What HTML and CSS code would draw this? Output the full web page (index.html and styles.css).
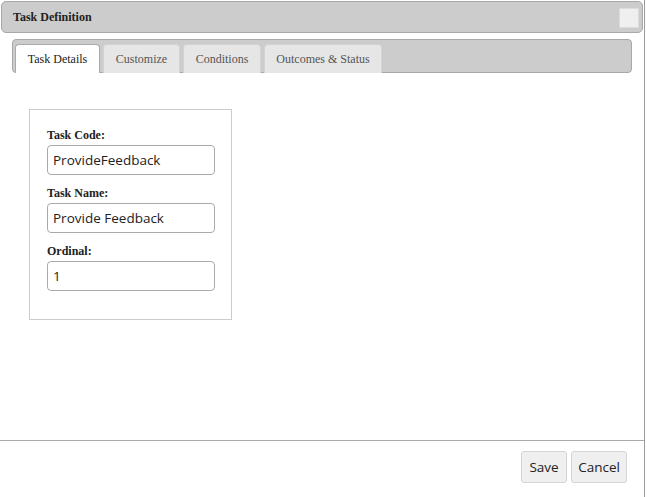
FILE: index.html
```html
<!DOCTYPE html>
<html>
<head>
<meta charset="utf-8">
<link rel="stylesheet" href="styles.css">
</head>
<body>
<div class="dialog">
  <div class="titlebar">
    <span class="title">Task Definition</span>
    <span class="close"></span>
  </div>
  <div class="tabbar">
    <div class="tab active">Task Details</div>
    <div class="tab">Customize</div>
    <div class="tab">Conditions</div>
    <div class="tab">Outcomes &amp; Status</div>
  </div>
  <div class="panel">
    <div class="formbox">
      <div class="field">
        <label class="label">Task Code:</label>
        <div class="input">ProvideFeedback</div>
      </div>
      <div class="field">
        <label class="label">Task Name:</label>
        <div class="input">Provide Feedback</div>
      </div>
      <div class="field">
        <label class="label">Ordinal:</label>
        <div class="input">1</div>
      </div>
    </div>
  </div>
  <div class="footer">
    <button class="btn btn-save">Save</button>
    <button class="btn btn-cancel">Cancel</button>
  </div>
</div>
</body>
</html>
```

FILE: styles.css
```css
html, body {
  margin: 0;
  padding: 0;
  background: #fff;
}
body {
  font-family: "Liberation Serif", "Times New Roman", serif;
  color: #222;
}
.dialog {
  width: 645px;
  height: 497px;
  box-sizing: border-box;
  border-right: 1px solid #9a9a9a;
  display: flex;
  flex-direction: column;
}
.titlebar {
  margin: 1px 1px 0 1px;
  height: 32px;
  box-sizing: border-box;
  background: #cccccc;
  border: 1px solid #a8a8a8;
  border-radius: 5px;
  display: flex;
  align-items: center;
  justify-content: space-between;
  padding: 0 3px 0 11px;
}
.title {
  font-weight: bold;
  font-size: 12px;
  color: #222;
}
.close {
  width: 20px;
  height: 20px;
  box-sizing: border-box;
  background: #efefef;
  border: 1px solid #dcdcdc;
  margin-top: 1px;
}
.tabbar {
  margin: 6px 12px 0 12px;
  height: 34px;
  box-sizing: border-box;
  background: #cccccc;
  border: 1px solid #a8a8a8;
  border-radius: 4px;
  padding: 4px 2px 0 2px;
  display: flex;
  gap: 3px;
}
.tab {
  height: 29px;
  margin-bottom: -1px;
  box-sizing: border-box;
  padding: 0;
  background: #e6e6e6;
  border: 1px solid #d3d3d3;
  border-bottom: none;
  border-radius: 4px 4px 0 0;
  font-size: 12px;
  color: #555;
  display: flex;
  align-items: center;
  justify-content: center;
}
.tab.active {
  background: #fff;
  border-color: #aaaaaa;
  color: #222;
}
.tab:nth-child(1) { width: 85px; }
.tab:nth-child(2) { width: 77px; }
.tab:nth-child(3) { width: 78px; }
.tab:nth-child(4) { width: 118px; }
.panel {
  flex: 1;
  padding: 36px 0 0 29px;
}
.formbox {
  width: 203px;
  height: 211px;
  box-sizing: border-box;
  border: 1px solid #cccccc;
  padding: 17px 0 0 17px;
  display: flex;
  flex-direction: column;
  gap: 10px;
}
.field {
  display: flex;
  flex-direction: column;
  gap: 2px;
}
.label {
  font-weight: bold;
  font-size: 12px;
  line-height: 16px;
  color: #222;
}
.input {
  width: 168px;
  height: 30px;
  box-sizing: border-box;
  border: 1px solid #aaaaaa;
  border-radius: 4px;
  padding: 0 5px;
  font-family: "Open Sans", "DejaVu Sans", sans-serif;
  font-size: 13.5px;
  color: #222;
  display: flex;
  align-items: center;
}
.footer {
  height: 57px;
  box-sizing: border-box;
  border-top: 1px solid #aaaaaa;
  padding: 10px 17px 0 0;
  display: flex;
  justify-content: flex-end;
  align-items: flex-start;
  gap: 4px;
}
.btn {
  height: 32px;
  box-sizing: border-box;
  background: #efefef;
  border: 1px solid #d5d5d5;
  border-radius: 3px;
  font-family: "Open Sans", "DejaVu Sans", sans-serif;
  font-size: 13.5px;
  color: #222;
  padding: 0;
  margin: 0;
}
.btn-save { width: 46px; }
.btn-cancel { width: 56px; }
```
